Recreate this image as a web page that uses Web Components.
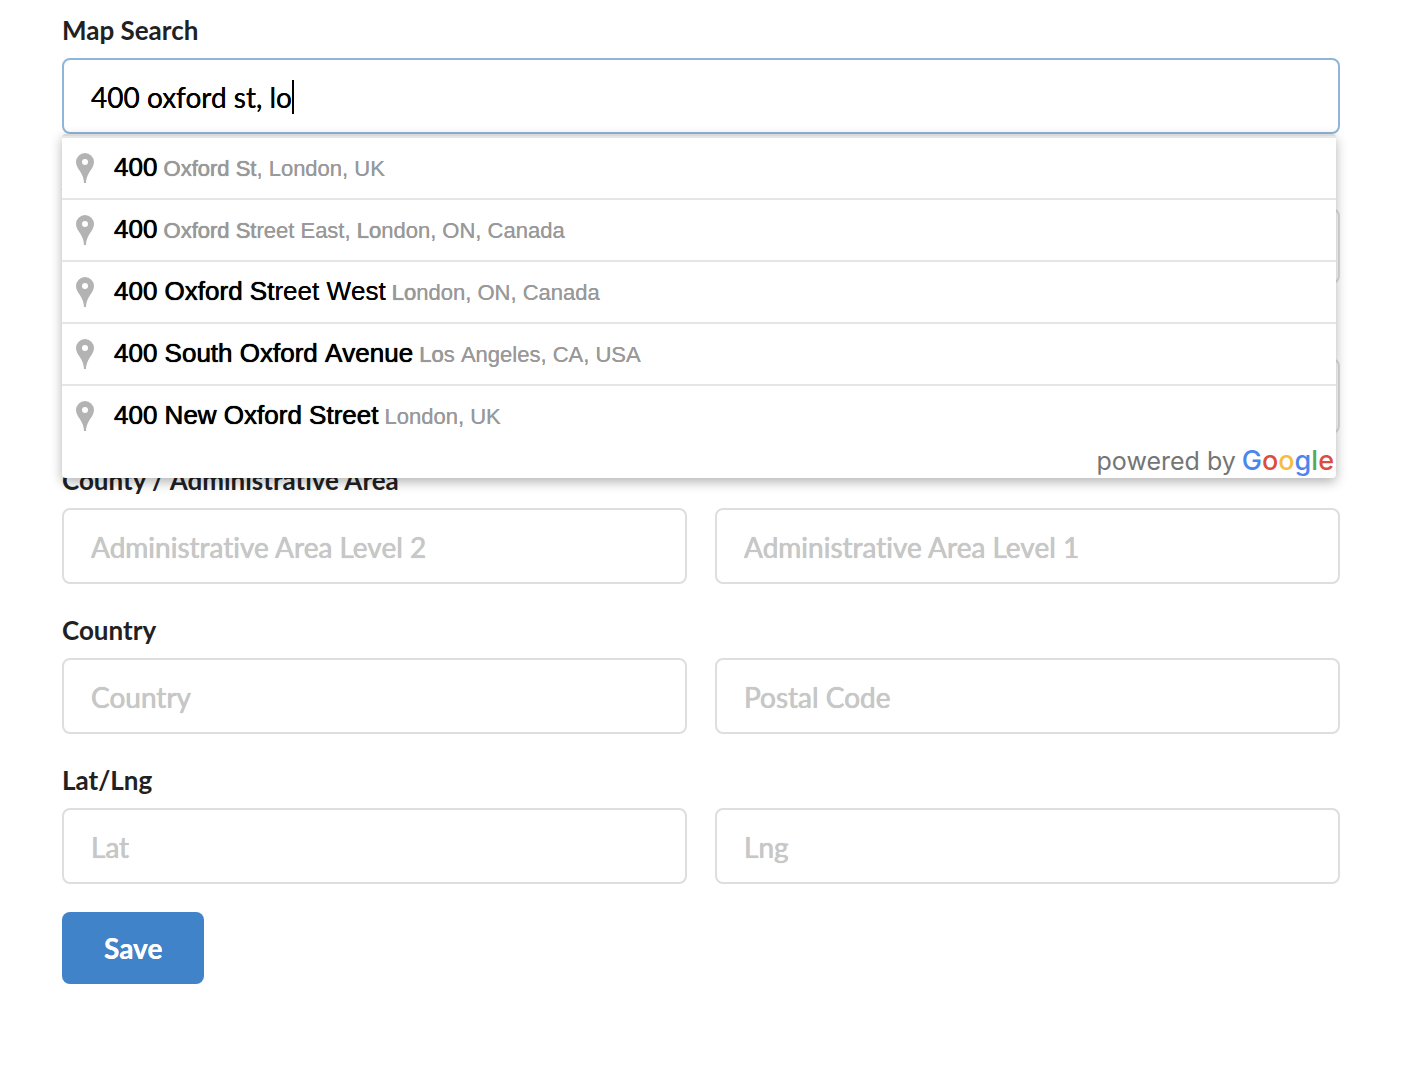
<!DOCTYPE html>
<html lang="en">
<head>
<meta charset="utf-8">
<title>Map Search</title>
<style>
  body { margin: 0; background: #fff; color: #212121; font-family: Lato, "Liberation Sans", sans-serif; font-size: 28px; font-variant-ligatures: none; }
</style>
</head>
<body>
<address-form></address-form>

<script>
const define = (name, html, setup) => {
  const template = document.createElement('template');
  template.innerHTML = html;
  customElements.define(name, class extends HTMLElement {
    constructor() {
      super();
      this.attachShadow({ mode: 'open' }).append(template.content.cloneNode(true));
    }
    connectedCallback() { if (setup) setup(this, this.shadowRoot); }
  });
};

define('field-row', `
  <style>
    :host { display: block; }
    label { display: block; margin-bottom: 10px; font-size: 26px; line-height: 36px; font-weight: 700; }
    .inputs { display: grid; grid-auto-flow: column; grid-auto-columns: 1fr; gap: 28px; }
    input { box-sizing: border-box; width: 100%; min-width: 0; height: 76px; padding: 2px 27px 0; border: 2px solid #dedede; border-radius: 8px; background: #fff; color: #000; font: inherit; font-variant-ligatures: none; outline: none; }
    input::placeholder { color: #c7c7c7; opacity: 1; text-shadow: 0 0 0 currentColor, 0 0 1px currentColor; }
  </style>
  <label for="first"></label>
  <div class="inputs"></div>`,
  (host, root) => {
    const label = host.getAttribute('label');
    root.querySelector('label').textContent = label;
    const box = root.querySelector('.inputs');
    box.replaceChildren(...(host.getAttribute('fields') || '').split('|').map((text, i) => {
      const input = document.createElement('input');
      input.type = 'text';
      input.id = i ? 'second' : 'first';
      if (text) input.placeholder = text;
      input.setAttribute('aria-label', text || label);
      return input;
    }));
  });

define('place-option', `
  <style>
    :host { display: flex; align-items: center; height: 60px; border-top: 2px solid #e6e6e6; padding: 0 14px; color: #999; font: 22px/60px "Liberation Sans", Arial, sans-serif; font-kerning: none; text-shadow: 0 0 0 currentColor; white-space: nowrap; cursor: default; }
    svg { display: block; width: 18px; height: 30px; margin-right: 20px; }
    ::slotted(b) { color: #000; font-size: 26px; font-weight: 400; }
  </style>
  <svg viewBox="0 0 18 30" aria-hidden="true"><path fill="#b3b3b3" fill-rule="evenodd" d="M9 0a9 9 0 0 1 9 9c0 3-1.400 5.200-3 7.800C12.200 21 10.400 24 10 30H8C7.600 24 5.800 21 3 16.800 1.400 14.200 0 12 0 9a9 9 0 0 1 9-9Zm0 6a3 3 0 1 0 0 6 3 3 0 0 0 0-6Z"/></svg>
  <div><slot></slot></div>`);

define('powered-by', `
  <style>
    :host { display: flex; justify-content: flex-end; align-items: baseline; gap: 6px; height: 32px; padding-right: 2px; font: 25px/30px Inter, sans-serif; color: #757575; }
    .b { color: #4a86ee; } .r { color: #db4e3f; } .y { color: #f4bd42; } .g { color: #57a75c; }
    .logo { font-size: 27px; font-weight: 500; }
  </style>
  <span>powered by</span>
  <span class="logo"><span class="b">G</span><span class="r">o</span><span class="y">o</span><span class="b">g</span><span class="g">l</span><span class="r">e</span></span>`);

define('map-search', `
  <style>
    :host { display: block; position: relative; }
    label { display: block; margin-bottom: 10px; font-size: 26px; line-height: 36px; font-weight: 700; }
    .box { box-sizing: border-box; display: flex; align-items: center; height: 76px; padding: 2px 27px 0; border: 2px solid #8fb5d9; border-radius: 8px; background: #fff; cursor: text; }
    input { field-sizing: content; height: 70px; padding: 0; border: 0; outline: none; background: none; color: #000; font: inherit; text-shadow: 0 0 0 currentColor; }
    .caret { width: 2px; height: 34px; background: #000; }
    .menu { position: absolute; top: 100%; left: 0; right: 4px; z-index: 1; border-top: 2px solid #d9d9d9; border-radius: 4px; background: #fff; box-shadow: 0 4px 12px rgba(0, 0, 0, .3); overflow: hidden; }
  </style>
  <label for="search">Map Search</label>
  <div class="box"><input id="search" type="text" value="400 oxford st, lo" autocomplete="off"><span class="caret"></span></div>
  <div class="menu"><slot></slot><powered-by></powered-by></div>`);

define('save-button', `
  <style>
    :host { display: block; }
    button { height: 72px; padding: 0 42px; border: 0; border-radius: 8px; background: #4183c9; color: #fff; font: 700 28px Lato, sans-serif; text-shadow: 0 0 0 currentColor; }
  </style>
  <button type="submit"><slot></slot></button>`);

define('address-form', `
  <style>
    :host { display: block; padding: 12px 80px 28px 62px; }
    form { display: flex; flex-direction: column; gap: 28px; }
    i { font-style: normal; text-shadow: 0 0 0 currentColor, 0 0 1px currentColor; }
  </style>
  <form>
    <map-search>
      <place-option><b><i>400</i></b> <i>Oxford St</i>, London, UK</place-option>
      <place-option><b><i>400</i></b> <i>Oxford St</i>reet East, <i>Lo</i>ndon, ON, Canada</place-option>
      <place-option><b><i>400 Oxford St</i>reet West</b> <i>Lo</i>ndon, ON, Canada</place-option>
      <place-option><b><i>400 South Oxford Avenue</i></b> <i>Lo</i>s Angeles, CA, USA</place-option>
      <place-option><b><i>400 New Oxford Street</i></b> London, UK</place-option>
    </map-search>
    <field-row label="Address" fields=""></field-row>
    <field-row label="City" fields=""></field-row>
    <field-row label="County / Administrative Area" fields="Administrative Area Level 2|Administrative Area Level 1"></field-row>
    <field-row label="Country" fields="Country|Postal Code"></field-row>
    <field-row label="Lat/Lng" fields="Lat|Lng"></field-row>
    <save-button>Save</save-button>
  </form>`);
</script>
</body>
</html>
